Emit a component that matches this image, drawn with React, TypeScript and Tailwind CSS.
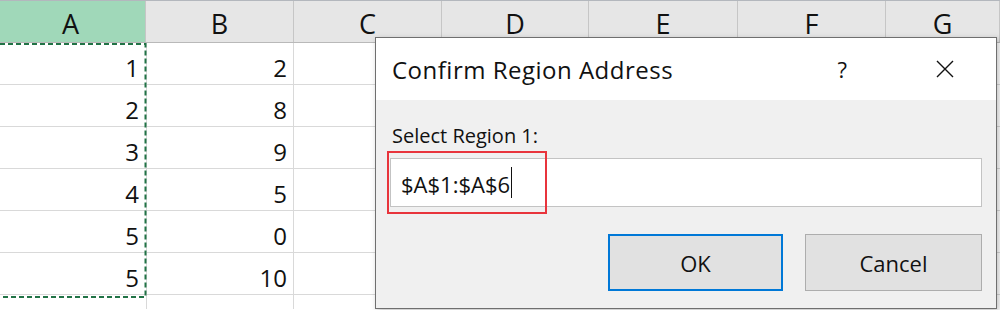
import React from 'react';

const columns = ['A', 'B', 'C', 'D', 'E', 'F', 'G'];
const widths = ['w-[146px]', 'w-[148px]', 'w-[148px]', 'w-[147px]', 'w-[149px]', 'w-[148px]', 'w-[114px]'];

const rows: [number, number][] = [
  [1, 2],
  [2, 8],
  [3, 9],
  [4, 5],
  [5, 0],
  [5, 10],
];

const Sheet: React.FC = () => {
  return (
    <div className="w-[1000px] h-[310px] bg-white font-['Open_Sans',sans-serif] text-[#111]">
      {/* column headers */}
      <div className="flex h-[43px] border-t border-[#b3b7bd] border-b border-b-[#b9b9b9] bg-[#e6e6e6]">
        {columns.map((c, i) => (
          <div
            key={c}
            className={`${widths[i]} shrink-0 flex items-center justify-center text-[27px] leading-none pt-[3px] border-r border-[#c6c6c6] ${
              i === 0 ? 'bg-[#a0d8b9]' : ''
            }`}
          >
            <span className={i === 0 ? '-ml-[4px]' : ''}>{c}</span>
          </div>
        ))}
      </div>

      {/* body */}
      <div className="relative">
        {rows.map(([a, b], r) => (
          <div key={r} className="flex h-[42px] border-b border-[#d9d9d9]">
            <div className="w-[146px] shrink-0 flex items-end justify-end pr-[7px] pb-[4px] text-[24px] leading-none">
              {a}
            </div>
            <div className="w-[148px] shrink-0 flex items-end justify-end pr-[6px] pb-[4px] text-[24px] leading-none border-l border-[#d9d9d9] border-r">
              {b}
            </div>
            <div className="w-[148px] shrink-0 border-r border-[#d9d9d9]" />
            <div className="w-[147px] shrink-0 border-r border-[#d9d9d9]" />
            <div className="w-[149px] shrink-0 border-r border-[#d9d9d9]" />
            <div className="w-[148px] shrink-0 border-r border-[#d9d9d9]" />
            <div className="flex-1" />
          </div>
        ))}
        <div className="flex h-[14px]">
          <div className="w-[146px] shrink-0" />
          <div className="w-[148px] shrink-0 border-l border-r border-[#d9d9d9]" />
          <div className="w-[148px] shrink-0 border-r border-[#d9d9d9]" />
        </div>
        {/* copy marquee */}
        <svg className="absolute left-0 top-0 pointer-events-none" width="150" height="256">
          <path
            d="M0 1 H145.5 V254 H0"
            fill="none"
            stroke="#217346"
            strokeWidth="2"
            strokeDasharray="5 3"
          />
        </svg>
      </div>
    </div>
  );
};

const Dialog: React.FC = () => {
  return (
    <div className="absolute left-[375px] top-[37px] w-[622px] h-[272px] border border-[#6f6f6f] bg-[#f0f0f0] shadow-[2px_2px_6px_rgba(0,0,0,0.25)] font-['Open_Sans',sans-serif] text-[#111]">
      <div className="h-[62px] bg-white flex items-center pl-[16px] pr-[36px]">
        <span className="text-[24px] tracking-[0.5px] pt-[1px]">Confirm Region Address</span>
        <span className="ml-auto text-[22px] mr-[89px]">?</span>
        <svg width="18" height="18" viewBox="0 0 18 18" className="mr-[6px]">
          <path d="M1 1 L17 17 M17 1 L1 17" stroke="#111" strokeWidth="1.4" fill="none" />
        </svg>
      </div>
      <div className="px-[14px] pt-[26px]">
        <div className="text-[20px] leading-none pl-[2px]">Select Region 1:</div>
        <div className="relative mt-[12px] h-[49px] bg-white border border-[#c3c3c3] flex items-center pl-[10px]">
          <span className="text-[22px] leading-none pt-[3px]">$A$1:$A$6</span>
          <span className="w-px h-[31px] bg-[#111] ml-[1px]" />
          <div className="absolute left-[-4px] top-[-8px] w-[160px] h-[63px] border-2 border-[#e8343c]" />
        </div>
        <div className="flex justify-end gap-[22px] mt-[27px]">
          <button className="w-[175px] h-[57px] bg-[#e1e1e1] border-2 border-[#0078d7] text-[22px] pt-[2px]">
            OK
          </button>
          <button className="w-[177px] h-[57px] bg-[#e1e1e1] border border-[#adadad] text-[22px] pt-[2px]">
            Cancel
          </button>
        </div>
      </div>
    </div>
  );
};

export default function App() {
  return (
    <div className="relative w-[1000px] h-[310px] overflow-hidden">
      <Sheet />
      <Dialog />
    </div>
  );
}
